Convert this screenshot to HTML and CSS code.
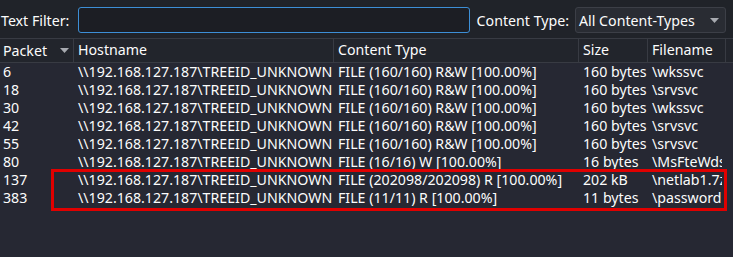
FILE: index.html
```html
<!DOCTYPE html>
<html>
<head>
<meta charset="utf-8">
<link rel="stylesheet" href="styles.css">
</head>
<body>
<div class="window">
  <div class="toolbar">
    <span class="label">Text Filter:</span>
    <div class="input"></div>
    <span class="label ct">Content Type:</span>
    <div class="combo"><span>All Content-Types</span><svg class="arrow" width="9" height="5" viewBox="0 0 9 5"><path d="M0 0H9L4.5 5Z" fill="#a7aab0"/></svg></div>
  </div>
  <div class="table">
    <div class="row head">
      <div class="c c1">Packet<svg class="sort" width="9" height="5" viewBox="0 0 9 5"><path d="M0 0H9L4.5 5Z" fill="#a7aab0"/></svg></div>
      <div class="c c2">Hostname</div>
      <div class="c c3">Content Type</div>
      <div class="c c4">Size</div>
      <div class="c c5">Filename</div>
    </div>
    <div class="body">
      <div class="row"><div class="c c1">6</div><div class="c c2">\\192.168.127.187\TREEID_UNKNOWN</div><div class="c c3">FILE (160/160) R&amp;W [100.00%]</div><div class="c c4">160 bytes</div><div class="c c5">\wkssvc</div></div>
      <div class="row"><div class="c c1">18</div><div class="c c2">\\192.168.127.187\TREEID_UNKNOWN</div><div class="c c3">FILE (160/160) R&amp;W [100.00%]</div><div class="c c4">160 bytes</div><div class="c c5">\srvsvc</div></div>
      <div class="row"><div class="c c1">30</div><div class="c c2">\\192.168.127.187\TREEID_UNKNOWN</div><div class="c c3">FILE (160/160) R&amp;W [100.00%]</div><div class="c c4">160 bytes</div><div class="c c5">\wkssvc</div></div>
      <div class="row"><div class="c c1">42</div><div class="c c2">\\192.168.127.187\TREEID_UNKNOWN</div><div class="c c3">FILE (160/160) R&amp;W [100.00%]</div><div class="c c4">160 bytes</div><div class="c c5">\srvsvc</div></div>
      <div class="row"><div class="c c1">55</div><div class="c c2">\\192.168.127.187\TREEID_UNKNOWN</div><div class="c c3">FILE (160/160) R&amp;W [100.00%]</div><div class="c c4">160 bytes</div><div class="c c5">\srvsvc</div></div>
      <div class="row"><div class="c c1">80</div><div class="c c2">\\192.168.127.187\TREEID_UNKNOWN</div><div class="c c3">FILE (16/16) W [100.00%]</div><div class="c c4">16 bytes</div><div class="c c5">\MsFteWds</div></div>
      <div class="row"><div class="c c1">137</div><div class="c c2">\\192.168.127.187\TREEID_UNKNOWN</div><div class="c c3">FILE (202098/202098) R [100.00%]</div><div class="c c4">202 kB</div><div class="c c5">\netlab1.7z</div></div>
      <div class="row"><div class="c c1">383</div><div class="c c2">\\192.168.127.187\TREEID_UNKNOWN</div><div class="c c3">FILE (11/11) R [100.00%]</div><div class="c c4">11 bytes</div><div class="c c5">\password</div></div>
      <div class="mark"></div>
    </div>
  </div>
</div>
</body>
</html>
```

FILE: styles.css
```css
html, body {
  margin: 0;
  padding: 0;
  background: #202329;
}
body {
  width: 733px;
  height: 257px;
  overflow: hidden;
  font-family: "Noto Sans", "Open Sans", sans-serif;
  font-size: 14.2px;
  color: #fcfcfc;
}
.window {
  display: flex;
  flex-direction: column;
  height: 257px;
}
.toolbar {
  display: flex;
  align-items: center;
  height: 38px;
  padding: 2px 7px 0 1px;
  box-sizing: border-box;
}
.label {
  white-space: nowrap;
}
.input {
  margin-left: auto;
  width: 392px;
  height: 26px;
  box-sizing: border-box;
  border: 1px solid #3d8fd6;
  border-radius: 3px;
  background: #1c1e24;
}
.ct {
  margin-left: 7px;
}
.combo {
  margin-left: 6px;
  width: 151px;
  height: 26px;
  box-sizing: border-box;
  border: 1px solid #3c3f47;
  border-radius: 3px;
  background: #292c33;
  display: flex;
  align-items: center;
  padding: 0 6px 0 3px;
}
.combo span {
  flex: 1;
}
.table {
  flex: 1;
  display: flex;
  flex-direction: column;
  border-top: 1px solid #383b43;
  background: #262833;
}
.row {
  display: grid;
  grid-template-columns: 74px 260px 245px 69px 74px;
  height: 18px;
  line-height: 18px;
}
.c {
  white-space: nowrap;
  overflow: hidden;
  padding-left: 4px;
}
.c1 { padding-left: 3px; }
.head {
  grid-template-columns: 74px 260px 245px 69px 78px;
  height: 23px;
  line-height: 22px;
  background: #22252c;
  border-bottom: 1px solid #383b43;
}
.head .c {
  border-right: 1px solid #383b43;
}
.head .c1 {
  display: flex;
  align-items: center;
}
.sort {
  margin-left: auto;
  margin-right: 4px;
}
.body {
  position: relative;
  flex: 1;
}
.mark {
  position: absolute;
  left: 51px;
  top: 106px;
  width: 676px;
  height: 42px;
  box-sizing: border-box;
  border: 3px solid #e00000;
}
```
